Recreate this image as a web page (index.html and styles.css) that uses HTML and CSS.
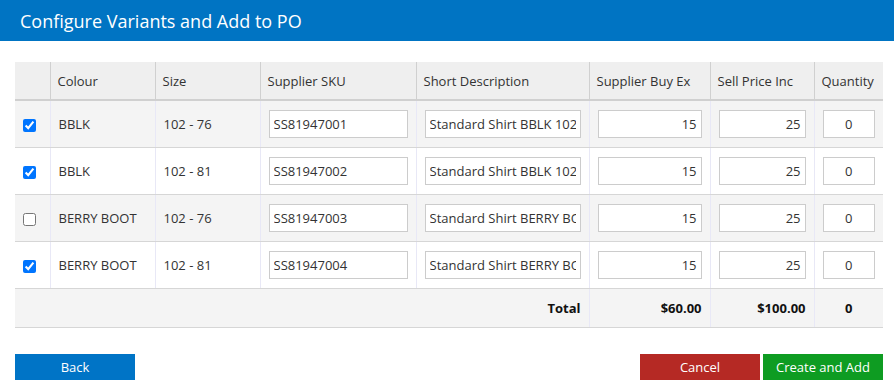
FILE: index.html
```html
<!DOCTYPE html>
<html lang="en">
<head>
    <meta charset="UTF-8">
    <meta name="viewport" content="width=device-width, initial-scale=1.0">
    <title>Configure Variants and Add to PO</title>
    <link rel="stylesheet" href="styles.css">
</head>
<body>
    <div class="title-bar">
        <h1>Configure Variants and Add to PO</h1>
    </div>

    <div class="content">
        <table class="variants">
            <colgroup>
                <col class="c-check">
                <col class="c-colour">
                <col class="c-size">
                <col class="c-sku">
                <col class="c-desc">
                <col class="c-buy">
                <col class="c-sell">
                <col class="c-qty">
            </colgroup>
            <thead>
                <tr>
                    <th></th>
                    <th>Colour</th>
                    <th>Size</th>
                    <th>Supplier SKU</th>
                    <th>Short Description</th>
                    <th>Supplier Buy Ex</th>
                    <th>Sell Price Inc</th>
                    <th>Quantity</th>
                </tr>
            </thead>
            <tbody>
                <tr>
                    <td><input type="checkbox" checked></td>
                    <td>BBLK</td>
                    <td>102 - 76</td>
                    <td><input type="text" value="SS81947001"></td>
                    <td><input type="text" value="Standard Shirt BBLK 102 - 76"></td>
                    <td><input type="text" class="num" value="15"></td>
                    <td><input type="text" class="num" value="25"></td>
                    <td><input type="text" class="qty" value="0"></td>
                </tr>
                <tr>
                    <td><input type="checkbox" checked></td>
                    <td>BBLK</td>
                    <td>102 - 81</td>
                    <td><input type="text" value="SS81947002"></td>
                    <td><input type="text" value="Standard Shirt BBLK 102 - 81"></td>
                    <td><input type="text" class="num" value="15"></td>
                    <td><input type="text" class="num" value="25"></td>
                    <td><input type="text" class="qty" value="0"></td>
                </tr>
                <tr>
                    <td><input type="checkbox"></td>
                    <td>BERRY BOOT</td>
                    <td>102 - 76</td>
                    <td><input type="text" value="SS81947003"></td>
                    <td><input type="text" value="Standard Shirt BERRY BOOT 102 - 76"></td>
                    <td><input type="text" class="num" value="15"></td>
                    <td><input type="text" class="num" value="25"></td>
                    <td><input type="text" class="qty" value="0"></td>
                </tr>
                <tr>
                    <td><input type="checkbox" checked></td>
                    <td>BERRY BOOT</td>
                    <td>102 - 81</td>
                    <td><input type="text" value="SS81947004"></td>
                    <td><input type="text" value="Standard Shirt BERRY BOOT 102 - 81"></td>
                    <td><input type="text" class="num" value="15"></td>
                    <td><input type="text" class="num" value="25"></td>
                    <td><input type="text" class="qty" value="0"></td>
                </tr>
            </tbody>
            <tfoot>
                <tr>
                    <td colspan="5" class="right">Total</td>
                    <td class="right">$60.00</td>
                    <td class="right">$100.00</td>
                    <td class="center">0</td>
                </tr>
            </tfoot>
        </table>

        <div class="actions">
            <button class="btn btn-back">Back</button>
            <div class="actions-right">
                <button class="btn btn-cancel">Cancel</button>
                <button class="btn btn-create">Create and Add</button>
            </div>
        </div>
    </div>
</body>
</html>
```

FILE: styles.css
```css
body {
    margin: 0;
    padding: 0;
    font-family: "Open Sans", Arial, sans-serif;
    font-size: 13px;
    color: #333;
    background: white;
}
.title-bar {
    background-color: #0074c3;
    height: 41px;
    padding: 0 20px;
    display: flex;
    align-items: center;
}
.title-bar h1 {
    margin: 0;
    font-size: 18px;
    font-weight: normal;
    color: white;
}
.content {
    padding: 21px 11px 0 15px;
}
.variants {
    width: 868px;
    border-collapse: collapse;
    table-layout: fixed;
}
.c-check { width: 35px; }
.c-colour { width: 105px; }
.c-size { width: 105px; }
.c-sku { width: 156px; }
.c-desc { width: 173px; }
.c-buy { width: 121px; }
.c-sell { width: 104px; }
.c-qty { width: 69px; }
.variants th {
    background-color: #efefef;
    height: 37px;
    padding: 0 7px;
    text-align: left;
    font-weight: normal;
    border-left: 1px solid #d0d0d0;
    border-bottom: 2px solid #d0d0d0;
}
.variants th:first-child {
    border-left: none;
}
.variants td {
    height: 46px;
    padding: 0 8px;
    border-left: 1px solid #e8e8f6;
    border-bottom: 1px solid #d6d6d6;
    white-space: nowrap;
    overflow: hidden;
}
.variants td:first-child {
    border-left: none;
}
.variants tbody tr:nth-child(odd) td {
    background-color: #f4f4f4;
}
.variants tfoot td {
    height: 38px;
    background-color: #f4f4f4;
    font-weight: bold;
    color: #111;
}
.right {
    text-align: right;
}
.center {
    text-align: center;
}
.variants input[type="checkbox"] {
    margin: 0;
    width: 13px;
    height: 13px;
    vertical-align: middle;
}
.variants input[type="text"] {
    width: 100%;
    height: 28px;
    box-sizing: border-box;
    border: 1px solid #cccccc;
    padding: 0 4px;
    font-family: "Open Sans", Arial, sans-serif;
    font-size: 13px;
    color: #333;
    background: white;
}
.variants input.num {
    text-align: right;
}
.variants input.qty {
    text-align: center;
}
.actions {
    display: flex;
    justify-content: space-between;
    margin-top: 26px;
}
.actions-right {
    display: flex;
    gap: 3px;
}
.btn {
    width: 120px;
    height: 26px;
    border: none;
    color: white;
    font-family: "Open Sans", Arial, sans-serif;
    font-size: 13px;
    cursor: pointer;
    padding: 0;
}
.btn-back {
    background-color: #0074c6;
}
.btn-cancel {
    background-color: #b52924;
}
.btn-create {
    background-color: #0e9c22;
}
```
